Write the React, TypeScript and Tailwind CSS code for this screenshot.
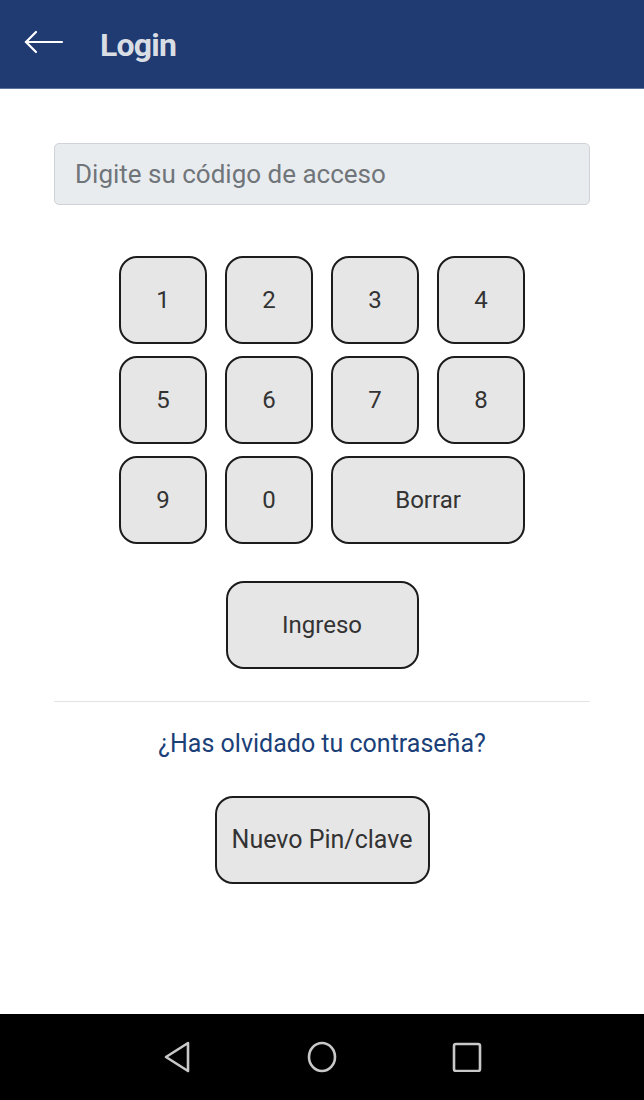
import React, { useState } from 'react';

const keyClass =
  'h-[88px] rounded-[18px] border-2 border-[#1c1c1c] bg-[#e6e6e6] text-[24px] text-[#333333] flex items-center justify-center';

export default function App() {
  const [code, setCode] = useState('');

  const press = (k: string) => setCode((c) => c + k);

  return (
    <div className="w-[644px] h-[1100px] bg-white flex flex-col font-['Roboto',sans-serif]">
      {/* app bar */}
      <div className="h-[89px] bg-[#1f3b72] border-b border-[#5a7399] flex items-center shrink-0">
        <svg width="40" height="24" viewBox="0 0 40 24" className="ml-[24px] -mt-[4px]" fill="none" stroke="#ffffff" strokeWidth="2.2" strokeLinecap="round">
          <path d="M2 12 H38" />
          <path d="M12 2 L2 12 L12 22" />
        </svg>
        <span className="ml-[36px] mt-[2px] text-[32px] font-bold text-[#d9dde4] tracking-tight">Login</span>
      </div>

      <div className="flex-1 flex flex-col items-center px-[54px]">
        <input
          value={code}
          onChange={(e) => setCode(e.target.value)}
          placeholder="Digite su código de acceso"
          className="mt-[54px] w-full h-[62px] rounded-[5px] border border-[#cfd2d6] bg-[#e9ecef] px-[20px] text-[26px] text-[#495057] placeholder:text-[#70757a] outline-none"
        />

        <div className="mt-[51px] grid grid-cols-[88px_88px_88px_88px] gap-x-[18px] gap-y-[12px]">
          {['1', '2', '3', '4', '5', '6', '7', '8', '9', '0'].map((k) => (
            <button key={k} className={keyClass} onClick={() => press(k)}>
              {k}
            </button>
          ))}
          <button className={keyClass + ' col-span-2'} onClick={() => setCode('')}>
            Borrar
          </button>
        </div>

        <button className={keyClass + ' mt-[37px] w-[193px]'}>Ingreso</button>

        <div className="mt-[32px] w-full h-px bg-[#e3e3e3]" />

        <a className="mt-[27px] text-[25px] leading-[30px] text-[#1b3f78]">¿Has olvidado tu contraseña?</a>

        <button className={keyClass + ' mt-[37px] w-[215px] text-[25px]'}>Nuevo Pin/clave</button>
      </div>

      {/* system nav bar */}
      <div className="h-[86px] bg-black flex items-center justify-center gap-[114px] shrink-0">
        <svg width="30" height="34" viewBox="0 0 30 34" fill="none" stroke="#c8c8c8" strokeWidth="2.6" strokeLinejoin="round">
          <path d="M26 3 L4 17 L26 31 Z" />
        </svg>
        <svg width="32" height="32" viewBox="0 0 32 32" fill="none" stroke="#c8c8c8" strokeWidth="2.6">
          <ellipse cx="16" cy="16" rx="13" ry="14" />
        </svg>
        <svg width="30" height="30" viewBox="0 0 30 30" fill="none" stroke="#c8c8c8" strokeWidth="2.6">
          <rect x="2" y="2" width="26" height="27" rx="2" />
        </svg>
      </div>
    </div>
  );
}
